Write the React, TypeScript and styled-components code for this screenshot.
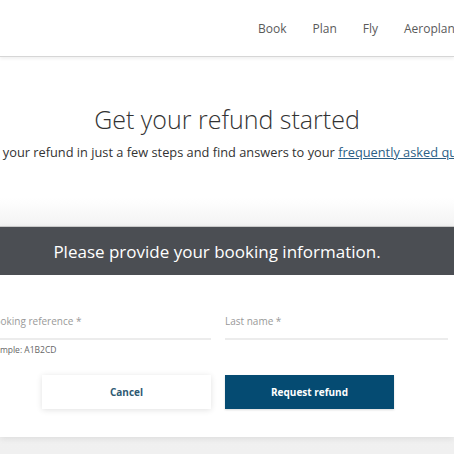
import styled, { createGlobalStyle } from 'styled-components';

const GlobalStyle = createGlobalStyle`
  html, body {
    margin: 0;
    padding: 0;
    background: #ffffff;
    overflow: hidden;
  }
  body {
    font-family: 'Open Sans', 'Liberation Sans', sans-serif;
    color: #333333;
  }
`;

const Page = styled.div`
  width: 454px;
  height: 454px;
  overflow: hidden;
  display: flex;
  flex-direction: column;
`;

const Header = styled.header`
  height: 57px;
  flex-shrink: 0;
  display: flex;
  align-items: center;
  padding-left: 258px;
  box-sizing: border-box;
  border-bottom: 1px solid #d6d6d6;
  box-shadow: 0 2px 3px rgba(0, 0, 0, 0.06);
  background: #ffffff;
`;

const Nav = styled.nav`
  display: flex;
  gap: 26px;
  white-space: nowrap;
`;

const NavItem = styled.a`
  font-size: 12px;
  color: #5a5a5a;
  text-decoration: none;
`;

const Intro = styled.section`
  display: flex;
  flex-direction: column;
  align-items: center;
  padding-top: 45px;
  height: 96px;
  flex-shrink: 0;
`;

const Title = styled.h1`
  margin: 0;
  font-weight: 300;
  font-size: 25px;
  line-height: 34px;
  color: #333333;
  white-space: nowrap;
`;

const Subtitle = styled.p`
  margin: 0;
  margin-top: 7px;
  font-size: 12.8px;
  line-height: 18px;
  color: #333333;
  white-space: nowrap;
`;

const FaqLink = styled.a`
  color: #2b5f86;
  text-decoration: underline;
`;

const Section = styled.section`
  flex: 1;
  background: linear-gradient(to bottom, #ffffff 0, #f3f3f3 28px, #f0f0f0 100%);
  padding-top: 28px;
`;

const Card = styled.div`
  background: #ffffff;
  box-shadow: 0 2px 6px rgba(0, 0, 0, 0.08);
  border-top: 1px solid #c9c9c9;
`;

const Band = styled.div`
  height: 48px;
  background: #4b4e53;
  display: flex;
  align-items: center;
  justify-content: center;
  padding-right: 20px;
  color: #ffffff;
  font-size: 17px;
  white-space: nowrap;
`;

const FormBody = styled.div`
  padding: 38px 0 28px;
`;

const FieldGrid = styled.div`
  display: grid;
  grid-template-columns: 223px 223px;
  column-gap: 14px;
  margin-left: -12px;
`;

const Field = styled.div`
  display: flex;
  flex-direction: column;
`;

const Label = styled.label`
  font-size: 10px;
  line-height: 16px;
  color: #999999;
  white-space: nowrap;
  padding-bottom: 9px;
  border-bottom: 2px solid #ececec;
`;

const Helper = styled.span`
  margin-top: 4px;
  font-size: 8.5px;
  line-height: 12px;
  color: #666666;
  white-space: nowrap;
  margin-left: -2px;
`;

const Buttons = styled.div`
  display: flex;
  gap: 14px;
  margin-top: 19px;
  padding-left: 42px;
`;

const Button = styled.button<{ $primary?: boolean }>`
  width: 169px;
  height: 34px;
  border: none;
  font-family: 'Open Sans', 'Liberation Sans', sans-serif;
  font-size: 10px;
  font-weight: 700;
  cursor: pointer;
  background: ${p => (p.$primary ? '#054b72' : '#ffffff')};
  color: ${p => (p.$primary ? '#ffffff' : '#2f5a73')};
  box-shadow: ${p =>
    p.$primary ? '0 1px 2px rgba(0,0,0,0.15)' : '0 1px 6px rgba(0,0,0,0.12)'};
`;

export default function App() {
  return (
    <>
      <GlobalStyle />
      <Page>
        <Header>
          <Nav>
            <NavItem>Book</NavItem>
            <NavItem>Plan</NavItem>
            <NavItem>Fly</NavItem>
            <NavItem>Aeroplan</NavItem>
          </Nav>
        </Header>
        <Intro>
          <Title>Get your refund started</Title>
          <Subtitle>
            Request your refund in just a few steps and find answers to your{' '}
            <FaqLink>frequently asked questions</FaqLink>.
          </Subtitle>
        </Intro>
        <Section>
          <Card>
            <Band>Please provide your booking information.</Band>
            <FormBody>
              <FieldGrid>
                <Field>
                  <Label>Booking reference *</Label>
                  <Helper>Example: A1B2CD</Helper>
                </Field>
                <Field>
                  <Label>Last name *</Label>
                </Field>
              </FieldGrid>
              <Buttons>
                <Button>Cancel</Button>
                <Button $primary>Request refund</Button>
              </Buttons>
            </FormBody>
          </Card>
        </Section>
      </Page>
    </>
  );
}
